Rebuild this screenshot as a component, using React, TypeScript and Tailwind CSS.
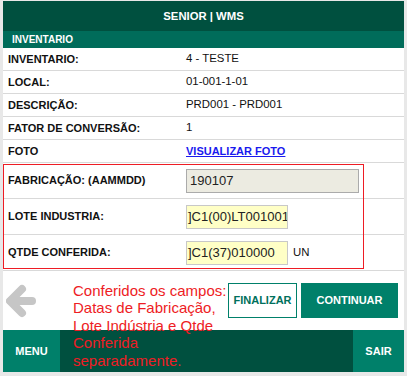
import React from "react";

const font = { fontFamily: '"Liberation Sans", Arial, sans-serif' };

function Row({ label, value, link }: { label: string; value: string; link?: boolean }) {
  return (
    <div className="grid grid-cols-[183px_1fr] h-[23px] items-center border-b border-[#d9d9d9]">
      <div className="pl-[5px] text-[11px] font-bold text-[#111]">{label}</div>
      <div className={link ? "text-[11px] font-bold text-[#1a1aee] underline" : "text-[11.4px] text-[#111]"}>{value}</div>
    </div>
  );
}

export default function App() {
  return (
    <div className="w-[407px] h-[376px] bg-[#e8e8e8] pt-[1px] px-[3px] pb-[4px]" style={font}>
      <div className="relative w-full h-full bg-white flex flex-col overflow-hidden">
        <div className="h-[30px] bg-[#00503f] flex items-center justify-center text-white text-[11.3px] font-bold">
          SENIOR | WMS
        </div>
        <div className="h-[17px] bg-[#006c5a] flex items-center pl-[9px] text-white text-[10px] font-bold">
          INVENTARIO
        </div>
        <Row label="INVENTARIO:" value="4 - TESTE" />
        <Row label="LOCAL:" value="01-001-1-01" />
        <Row label="DESCRIÇÃO:" value="PRD001 - PRD001" />
        <Row label="FATOR DE CONVERSÃO:" value="1" />
        <Row label="FOTO" value="VISUALIZAR FOTO" link />

        <div className="grid grid-cols-[183px_1fr] h-[36px] items-center border-b border-[#d9d9d9]">
          <div className="pl-[5px] text-[11px] font-bold text-[#111]">FABRICAÇÃO: (AAMMDD)</div>
          <div className="w-[173px] h-[24px] bg-[#ecebe1] border border-[#ababab] flex items-center pl-[3px] text-[13px] text-[#222]">
            190107
          </div>
        </div>
        <div className="grid grid-cols-[183px_1fr] h-[36px] items-center border-b border-[#d9d9d9]">
          <div className="pl-[5px] text-[11px] font-bold text-[#111]">LOTE INDUSTRIA:</div>
          <div className="w-[102px] h-[24px] bg-[#ffffc6] border border-[#c8c8c8] flex items-center pl-[1px] text-[13px] text-[#222] overflow-hidden whitespace-nowrap">
            ]C1(00)LT001001
          </div>
        </div>
        <div className="grid grid-cols-[183px_1fr] h-[36px] items-center border-b border-[#d9d9d9]">
          <div className="pl-[5px] text-[11px] font-bold text-[#111]">QTDE CONFERIDA:</div>
          <div className="flex items-center gap-[5px]">
            <div className="w-[102px] h-[24px] bg-[#ffffc6] border border-[#c8c8c8] flex items-center pl-[1px] text-[13px] text-[#222] overflow-hidden whitespace-nowrap">
              ]C1(37)010000
            </div>
            <span className="text-[11.4px] text-[#111]">UN</span>
          </div>
        </div>

        <div className="h-[59px] flex items-center pl-[3px] pr-[6px]">
          <svg width="30" height="34" viewBox="0 0 30 34" className="shrink-0">
            <g stroke="#c6c6c6" strokeWidth="8" strokeLinecap="round" strokeLinejoin="round" fill="none">
              <path d="M16 5 L4 17 L16 29" />
              <path d="M5 17 L26 17" />
            </g>
          </svg>
          <div className="ml-auto flex gap-[4px]">
            <div className="w-[69px] h-[35px] border border-[#00806a] flex items-center justify-center text-[11px] font-bold text-[#00705c]">
              FINALIZAR
            </div>
            <div className="w-[97px] h-[35px] bg-[#00806a] flex items-center justify-center text-[11px] font-bold text-white">
              CONTINUAR
            </div>
          </div>
        </div>

        <div className="h-[42px] flex">
          <div className="w-[57px] bg-[#00806a] flex items-center justify-center text-white text-[11px] font-bold">MENU</div>
          <div className="flex-1 bg-[#00503f]" />
          <div className="w-[51px] bg-[#00806a] flex items-center justify-center text-white text-[11px] font-bold">SAIR</div>
        </div>

        <div className="absolute left-0 top-[163px] w-[361px] h-[105px] border border-[#ee1c24] pointer-events-none" />
        <div className="absolute left-[70px] top-[281px] w-[158px] text-[15px] leading-[17.4px] text-[#ee1c24]">
          Conferidos os campos: Datas de Fabricação, Lote Indústria e Qtde Conferida separadamente.
        </div>
      </div>
    </div>
  );
}
